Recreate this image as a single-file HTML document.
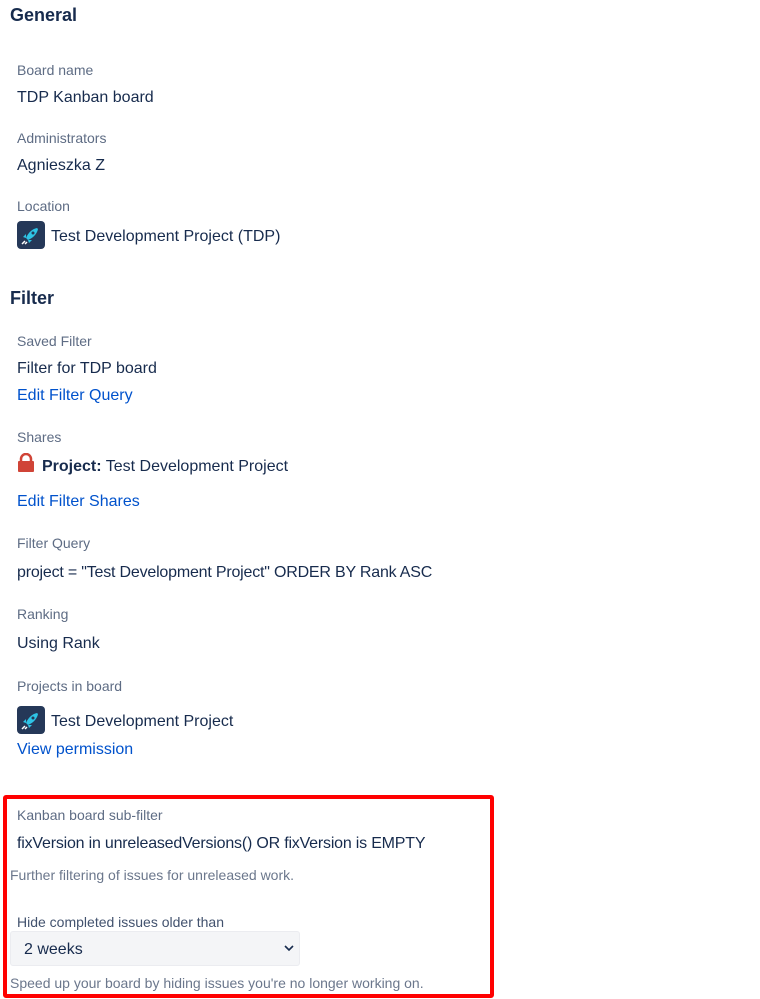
<!DOCTYPE html>
<html><head><meta charset="utf-8"><style>
body{margin:0;width:760px;height:999px;background:#fff;position:relative;font-family:"Liberation Sans",sans-serif;color:#172b4d;overflow:hidden}
.t{position:absolute;line-height:20px;white-space:nowrap}
.h{font-size:18px;font-weight:bold;left:10px}
.l{font-size:14px;color:#5e6c84;left:17px}
.v{font-size:16px;left:17px;margin-top:2px}
.a{font-size:16px;left:17px;color:#0052cc;margin-top:2px}
.s{font-size:14px;color:#6b778c;left:10px}
.ic{position:absolute;width:28px;height:28px;border-radius:4px;background:#253858}
</style></head><body>
<div class="t h" style="top:5px">General</div>
<div class="t l" style="top:60px">Board name</div>
<div class="t v" style="top:86px">TDP Kanban board</div>
<div class="t l" style="top:128px">Administrators</div>
<div class="t v" style="top:154px">Agnieszka Z</div>
<div class="t l" style="top:196px">Location</div>
<div class="ic" style="left:17px;top:221px"><svg width="28" height="28" viewBox="0 0 28 28"><path d="M20 7 C15 8 11 12 9 17 L11 19 C16 17 20 13 21 8Z" fill="#2ec4e6"/><path d="M9 17 L6 16 L9 13Z M11 19 L12 22 L15 19Z" fill="#2ec4e6"/><path d="M8 20 L5 23 M10 21 L8 23" stroke="#fff" stroke-width="1.5"/><circle cx="16" cy="12" r="1.5" fill="#253858"/></svg></div>
<div class="t v" style="top:225px;left:51px">Test Development Project (TDP)</div>
<div class="t h" style="top:288px">Filter</div>
<div class="t l" style="top:331px">Saved Filter</div>
<div class="t v" style="top:357px">Filter for TDP board</div>
<div class="t a" style="top:384px">Edit Filter Query</div>
<div class="t l" style="top:427px">Shares</div>
<svg style="position:absolute;left:17px;top:453px" width="18" height="20" viewBox="0 0 18 20"><path d="M4 9 V6 a5 5 0 0 1 10 0 V9" fill="none" stroke="#d04437" stroke-width="2.5"/><rect x="1" y="8" width="16" height="11" rx="1" fill="#d04437"/></svg>
<div class="t v" style="top:455px;left:42px"><b>Project:</b> Test Development Project</div>
<div class="t a" style="top:490px">Edit Filter Shares</div>
<div class="t l" style="top:533px">Filter Query</div>
<div class="t v" style="top:561px;letter-spacing:-0.2px">project = "Test Development Project" ORDER BY Rank ASC</div>
<div class="t l" style="top:604px">Ranking</div>
<div class="t v" style="top:632px">Using Rank</div>
<div class="t l" style="top:676px">Projects in board</div>
<div class="ic" style="left:17px;top:706px"><svg width="28" height="28" viewBox="0 0 28 28"><path d="M20 7 C15 8 11 12 9 17 L11 19 C16 17 20 13 21 8Z" fill="#2ec4e6"/><path d="M9 17 L6 16 L9 13Z M11 19 L12 22 L15 19Z" fill="#2ec4e6"/><path d="M8 20 L5 23 M10 21 L8 23" stroke="#fff" stroke-width="1.5"/><circle cx="16" cy="12" r="1.5" fill="#253858"/></svg></div>
<div class="t v" style="top:710px;left:51px">Test Development Project</div>
<div class="t a" style="top:738px">View permission</div>
<div style="position:absolute;left:3px;top:795px;width:483px;height:195px;border:4px solid #f00;border-radius:3px"></div>
<div class="t l" style="top:805px">Kanban board sub-filter</div>
<div class="t v" style="top:832px;letter-spacing:-0.2px">fixVersion in unreleasedVersions() OR fixVersion is EMPTY</div>
<div class="t s" style="top:865px">Further filtering of issues for unreleased work.</div>
<div class="t l" style="top:912px;color:#42526e">Hide completed issues older than</div>
<div style="position:absolute;left:10px;top:931px;width:288px;height:33px;background:#f4f5f7;border:1px solid #ebecf0;border-radius:3px"></div>
<div class="t v" style="top:938px;left:24px">2 weeks</div>
<svg style="position:absolute;left:284px;top:944px" width="10" height="8" viewBox="0 0 10 8"><path d="M1 2 L5 6 L9 2" fill="none" stroke="#172b4d" stroke-width="1.6"/></svg>
<div class="t s" style="top:973px">Speed up your board by hiding issues you're no longer working on.</div>
</body></html>
